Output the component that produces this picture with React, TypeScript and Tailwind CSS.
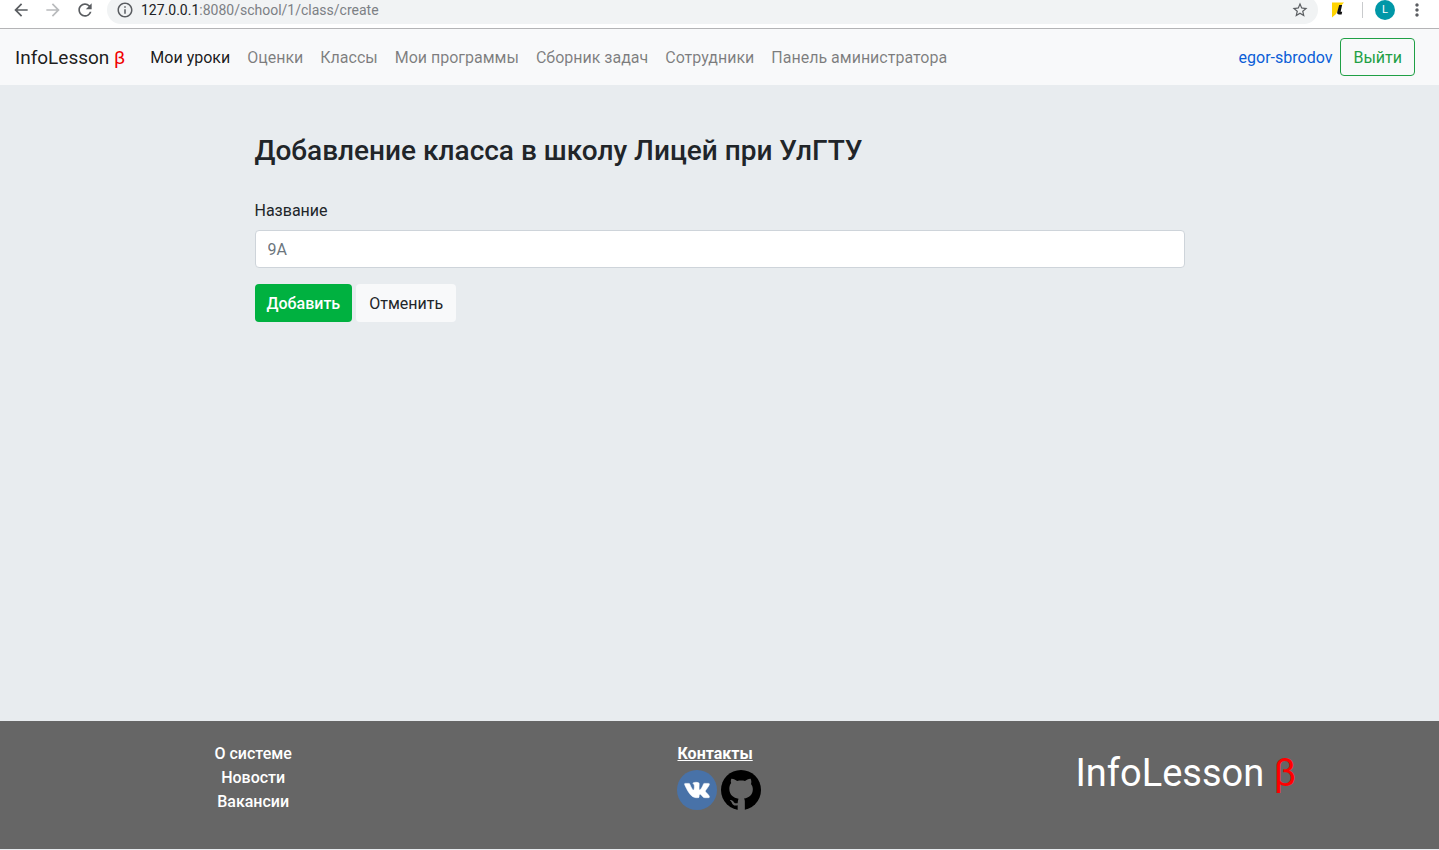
import { MdArrowBack, MdArrowForward, MdRefresh, MdInfoOutline, MdStarBorder, MdMoreVert } from "react-icons/md";

const navLinks = ["Мои уроки", "Оценки", "Классы", "Мои программы", "Сборник задач", "Сотрудники", "Панель аминистратора"];
const footerLinks = ["О системе", "Новости", "Вакансии"];

function BrowserBar() {
  return (
    <div className="flex h-[29px] items-start overflow-hidden border-b border-[#b4b4b6] bg-white">
      <div className="-mt-1 flex h-7 w-full items-center pr-3 text-[#5a5d61]">
        <button type="button" aria-label="Назад" className="ml-[11px]"><MdArrowBack size={20} /></button>
        <button type="button" aria-label="Вперёд" className="ml-3 text-[#b9bbbd]"><MdArrowForward size={20} /></button>
        <button type="button" aria-label="Обновить" className="ml-3"><MdRefresh size={20} /></button>
        <div className="ml-3 flex h-7 flex-1 items-center rounded-full bg-[#f1f3f4] px-[9px]">
          <MdInfoOutline size={18} />
          <div className="ml-[7px] flex-1 text-[14px] text-[#7c8084]">
            <span className="text-[#202124]">127.0.0.1</span>:8080/school/1/class/create
          </div>
          <button type="button" aria-label="Добавить в закладки"><MdStarBorder size={18} /></button>
        </div>
        <button type="button" aria-label="Расширение" className="ml-3">
          <svg width="16" height="16" viewBox="0 0 16 16">
            <path d="M2 .6h12L9 6l-3 6-4 3.600z" fill="#ffd400" />
            <path d="M9.200 3h2.900l-1.500 6.800h1.600l-.6 2.600H9.200c-1.700 0-2.300-1-2-2.400z" fill="#111" />
          </svg>
        </button>
        <span className="ml-4 h-4 w-px bg-[#c9cbcd]" />
        <button type="button" className="ml-3 size-5 rounded-full bg-[#0097a7] text-[11px] leading-5 text-white">L</button>
        <button type="button" aria-label="Меню" className="ml-3"><MdMoreVert size={20} /></button>
      </div>
    </div>
  );
}

function Navbar() {
  return (
    <header className="flex h-14 items-center bg-[#f8f9fa] pr-6 pl-[15px]">
      <a href="#" className="mr-[25px] pt-0.5 text-[19px] text-black/90">
        InfoLesson <span className="text-[#f00000]">β</span>
      </a>
      <nav className="flex gap-[17px] pt-0.5">
        {navLinks.map((label, i) => (
          <a key={label} href="#" className={i === 0 ? "text-black/90" : "text-black/50"}>{label}</a>
        ))}
      </nav>
      <a href="#" className="ml-auto pt-0.5 text-[#0b5ed7]">egor-sbrodov</a>
      <button type="button" className="ml-2 h-[38px] rounded border border-[#1fa045] px-3 pt-0.5 text-[#1fa045]">Выйти</button>
    </header>
  );
}

function Footer() {
  return (
    <footer className="grid h-[129px] grid-cols-3 border-b border-[#e8ecef] bg-[#666666] px-5 pt-[21px] text-white">
      <div className="flex flex-col items-center">
        {footerLinks.map((label) => (
          <a key={label} href="#" className="font-medium">{label}</a>
        ))}
      </div>
      <div className="flex justify-center">
        <div>
          <h2 className="font-bold underline">Контакты</h2>
          <div className="mt-1 flex gap-1">
            <a href="#" aria-label="ВКонтакте">
              <svg width="40" height="40" viewBox="0 0 40 40">
                <circle cx="20" cy="20" r="20" fill="#4872a8" />
                <path transform="translate(7.500 6.800) scale(1.040 1.100)" fill="#fff" stroke="#fff" strokeWidth=".5" d="M13.162 18.994c.609 0 .858-.406.851-.915-.031-1.917.714-2.949 2.059-1.604 1.488 1.488 1.796 2.519 3.603 2.519h3.200c.808 0 1.126-.26 1.126-.668 0-.863-1.421-2.386-2.625-3.504-1.686-1.565-1.765-1.602-.313-3.486 1.801-2.339 4.157-5.336 2.073-5.336h-3.981c-.772 0-.828.435-1.103 1.083-.995 2.347-2.886 5.387-3.604 4.922-.751-.485-.407-2.406-.35-5.261.015-.754.011-1.271-1.141-1.539-.629-.145-1.241-.205-1.809-.205-2.273 0-3.841.953-2.950 1.119 1.571.293 1.420 3.692 1.054 5.160-.638 2.556-3.036-2.024-4.035-4.305-.241-.548-.315-.974-1.175-.974h-3.255c-.492 0-.787.160-.787.516 0 .602 2.960 6.720 5.786 9.770 2.756 2.975 5.480 2.708 7.376 2.708z" />
              </svg>
            </a>
            <a href="#" aria-label="GitHub">
              <svg width="40" height="40" viewBox="0 0 24 24">
                <circle cx="12" cy="12" r="12" fill="#000" />
                <path
                  fill="#666666"
                  d="M6.200 5.200C7.400 5.100 8.800 5.900 9.700 6.600c1.500-.4 3.200-.4 4.700 0 .9-.7 2.200-1.500 3.400-1.400.5 1.200.5 2.300.2 3.200.7.900 1.100 1.900 1.100 3 0 3.700-2.300 5.300-5.300 5.700.4.500.5 1.100.5 2V24H10v-2.800c-2.300.4-3-.4-3.500-1.600-.3-.7-.7-1.100-1.200-1.500 1.200-.3 1.900.5 2.400 1.200.6.700 1.300.8 2.300.6 0-.8.200-1.900.5-2.700-3-.4-5.500-2.100-5.500-5.900 0-1.300.3-2.500 1.100-3.500-.3-1-.3-1.400.1-2.600z"
                />
              </svg>
            </a>
          </div>
        </div>
      </div>
      <div className="pt-1 text-center text-[38px] leading-[54px]">
        InfoLesson <span className="text-[#ff0000]">β</span>
      </div>
    </footer>
  );
}

export default function App() {
  return (
    <div className="flex min-h-screen flex-col bg-[#e8ecef] font-['Roboto',sans-serif] text-[16px] leading-6 text-[#212529]">
      <BrowserBar />
      <Navbar />
      <main className="mx-auto w-full max-w-[960px] flex-1 px-[15px] pt-12">
        <h1 className="text-[28px] leading-9 font-medium">Добавление класса в школу Лицей при УлГТУ</h1>
        <form className="mt-[30px]" onSubmit={(e) => e.preventDefault()}>
          <label htmlFor="class-name" className="mb-[7px] block">Название</label>
          <input
            id="class-name"
            type="text"
            placeholder="9А"
            className="block h-[38px] w-full rounded border border-[#ced4da] bg-white px-3 placeholder:text-[#6c757d]"
          />
          <div className="mt-4 flex gap-1">
            <button type="submit" className="h-[38px] rounded bg-[#00b140] px-3 pt-0.5 font-medium text-white">Добавить</button>
            <button type="button" className="h-[38px] rounded bg-[#f8f9fa] px-[13px] pt-0.5">Отменить</button>
          </div>
        </form>
      </main>
      <Footer />
    </div>
  );
}
